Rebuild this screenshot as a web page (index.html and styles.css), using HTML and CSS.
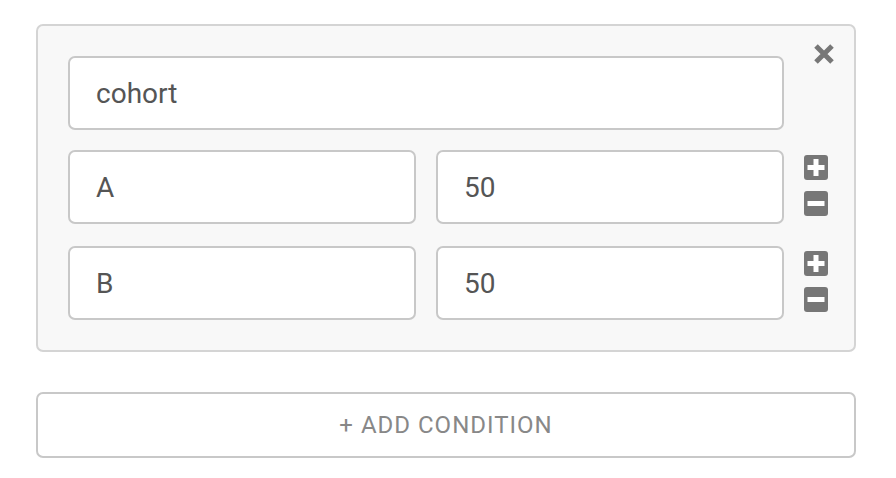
FILE: index.html
```html
<!DOCTYPE html>
<html lang="en">
<head>
    <meta charset="UTF-8">
    <title>Conditions</title>
    <link rel="stylesheet" href="styles.css">
</head>
<body>
<div class="wrap">
    <div class="panel">
        <a class="close" href="javascript:;">
            <svg width="22" height="20" viewBox="0 0 22 20"><path d="M3 2L19 18M19 2L3 18" stroke="#777" stroke-width="5"/></svg>
        </a>
        <div class="row">
            <input class="field wide" type="text" value="cohort">
        </div>
        <div class="row">
            <input class="field" type="text" value="A">
            <input class="field" type="text" value="50">
            <div class="tools">
                <a href="javascript:;"><svg width="24" height="25" viewBox="0 0 24 25"><rect width="24" height="25" rx="3" fill="#777"/><path d="M12 4v17M3.5 12.5h17" stroke="#fff" stroke-width="5"/></svg></a>
                <a href="javascript:;"><svg width="24" height="25" viewBox="0 0 24 25"><rect width="24" height="25" rx="3" fill="#777"/><path d="M3.5 12.5h17" stroke="#fff" stroke-width="5"/></svg></a>
            </div>
        </div>
        <div class="row">
            <input class="field" type="text" value="B">
            <input class="field" type="text" value="50">
            <div class="tools">
                <a href="javascript:;"><svg width="24" height="25" viewBox="0 0 24 25"><rect width="24" height="25" rx="3" fill="#777"/><path d="M12 4v17M3.5 12.5h17" stroke="#fff" stroke-width="5"/></svg></a>
                <a href="javascript:;"><svg width="24" height="25" viewBox="0 0 24 25"><rect width="24" height="25" rx="3" fill="#777"/><path d="M3.5 12.5h17" stroke="#fff" stroke-width="5"/></svg></a>
            </div>
        </div>
    </div>
    <button class="add" type="button">+ ADD CONDITION</button>
</div>
</body>
</html>
```
FILE: styles.css
```css
* {
    margin: 0;
    padding: 0;
    box-sizing: border-box;
}

a {
    text-decoration: none;
}

body {
    font-family: Roboto, "Liberation Sans", sans-serif;
    background: #fff;
}

.wrap {
    width: 820px;
    margin: 24px 0 0 36px;
}

.panel {
    position: relative;
    background: #f8f8f8;
    border: 2px solid #d4d4d4;
    border-radius: 7px;
    padding: 30px 0 30px 30px;
}

.close {
    position: absolute;
    top: 18px;
    right: 19px;
    display: block;
    line-height: 0;
}

.row {
    display: flex;
    align-items: center;
    gap: 20px;
    width: 716px;
}

.row + .row {
    margin-top: 20px;
}

.row + .row + .row {
    margin-top: 22px;
}

.field {
    width: 348px;
    height: 74px;
    border: 2px solid #c8c8c8;
    border-radius: 7px;
    background: #fff;
    padding: 0 26px;
    font-family: Roboto, "Liberation Sans", sans-serif;
    font-size: 28px;
    color: #555;
    outline: none;
}

.field.wide {
    width: 716px;
}

.tools {
    display: flex;
    flex-direction: column;
    gap: 11px;
    flex: none;
    width: 24px;
    margin-top: -3px;
    margin-right: -44px;
}

.tools a {
    display: block;
    line-height: 0;
}

.add {
    display: block;
    width: 820px;
    height: 66px;
    margin-top: 40px;
    background: #fff;
    border: 2px solid #c8c8c8;
    border-radius: 7px;
    font-family: Roboto, "Liberation Sans", sans-serif;
    font-size: 24px;
    letter-spacing: 1px;
    color: #888;
    cursor: pointer;
}
```
